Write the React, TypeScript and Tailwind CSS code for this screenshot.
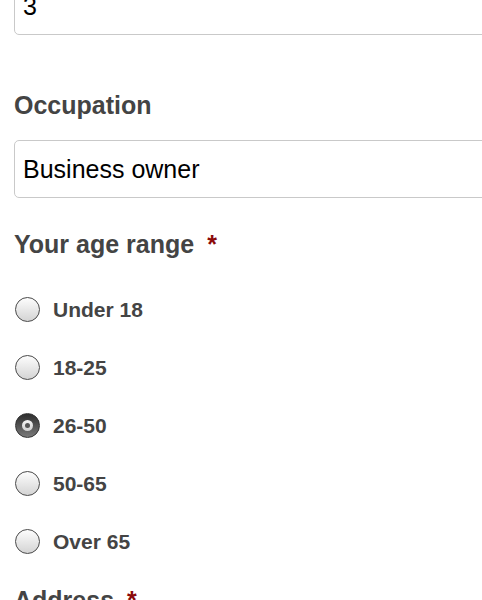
import React from "react";

const options = ["Under 18", "18-25", "26-50", "50-65", "Over 65"];

function Radio({ checked }: { checked: boolean }) {
  if (checked) {
    return (
      <span className="flex h-[25px] w-[25px] shrink-0 items-center justify-center rounded-full border border-[#333] bg-gradient-to-b from-[#2e2e2e] to-[#7a7a7a]">
        <span className="flex h-[11px] w-[11px] items-center justify-center rounded-full bg-gradient-to-b from-[#f4f4f4] to-[#cfcfcf]">
          <span className="h-[5px] w-[5px] rounded-full bg-[#555]" />
        </span>
      </span>
    );
  }
  return (
    <span className="h-[25px] w-[25px] shrink-0 rounded-full border-[1.5px] border-[#4a4a4a] bg-gradient-to-b from-[#fdfdfd] to-[#d4d4d4]" />
  );
}

function Label({ text, required }: { text: string; required?: boolean }) {
  return (
    <div className="text-[25px] leading-[30px] font-bold text-[#444]">
      {text}
      {required && <span className="ml-[13px] text-[#8b0a0a]">*</span>}
    </div>
  );
}

export default function App() {
  return (
    <div
      className="h-[600px] w-[482px] overflow-hidden bg-white pl-[14px]"
      style={{ fontFamily: '"Liberation Sans", Arial, sans-serif' }}
    >
      <div className="mt-[-23px] flex h-[58px] w-[520px] items-center rounded-[5px] border border-[#c9c9c9] px-[8px] pt-[2px] text-[25px] text-black">
        3
      </div>

      <div className="mt-[55px]">
        <Label text="Occupation" />
      </div>
      <div className="mt-[20px] flex h-[58px] w-[520px] items-center rounded-[5px] border border-[#c9c9c9] px-[8px] pt-[2px] text-[25px] text-black">
        Business owner
      </div>

      <div className="mt-[31px]">
        <Label text="Your age range" required />
      </div>

      <div className="mt-[38px] flex flex-col gap-[33px]">
        {options.map((o) => (
          <div key={o} className="flex h-[25px] items-center gap-[13px] pl-[1px]">
            <Radio checked={o === "26-50"} />
            <span className="text-[21px] leading-[25px] font-bold text-[#444]">{o}</span>
          </div>
        ))}
      </div>

      <div className="mt-[31px]">
        <Label text="Address" required />
      </div>
    </div>
  );
}
